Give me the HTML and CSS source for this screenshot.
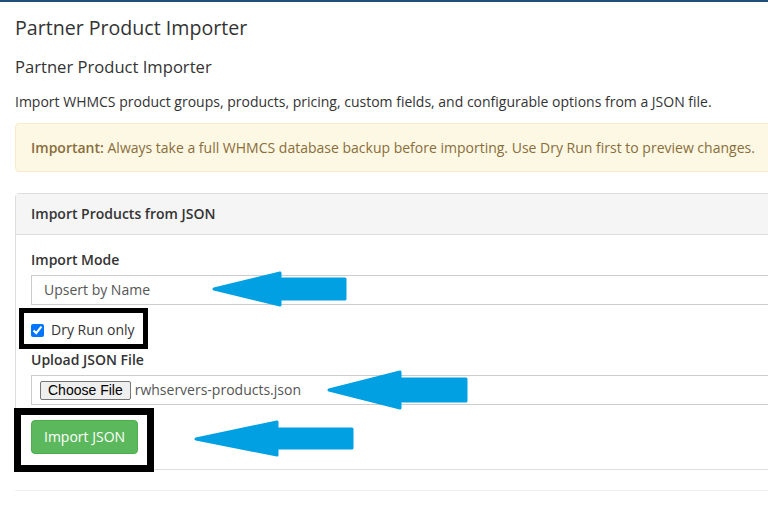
FILE: index.html
```html
<!DOCTYPE html>
<html lang="en">
<head>
  <meta charset="UTF-8">
  <title>Partner Product Importer</title>
  <link rel="stylesheet" href="styles.css">
</head>
<body>
  <div class="topbar"></div>
  <div class="content">
    <h1>Partner Product Importer</h1>
    <h2>Partner Product Importer</h2>
    <p class="lead">Import WHMCS product groups, products, pricing, custom fields, and configurable options from a JSON file.</p>

    <div class="alert">
      <strong>Important:</strong> Always take a full WHMCS database backup before importing. Use Dry Run first to preview changes.
    </div>

    <div class="panel">
      <div class="panel-heading">Import Products from JSON</div>
      <div class="panel-body">
        <div class="form-group">
          <label class="control-label">Import Mode</label>
          <div class="form-control">Upsert by Name</div>
        </div>
        <div class="checkbox">
          <input type="checkbox" checked>
          <span>Dry Run only</span>
        </div>
        <div class="form-group">
          <label class="control-label">Upload JSON File</label>
          <div class="form-control file-control">
            <span class="file-btn">Choose File</span>
            <span class="file-name">rwhservers-products.json</span>
          </div>
        </div>
        <button class="btn-success">Import JSON</button>
      </div>
    </div>
    <hr>
  </div>

  <!-- annotations drawn over the screenshot -->
  <div class="mark mark-dry"></div>
  <div class="mark mark-btn"></div>
  <svg class="arrows" width="768" height="512" viewBox="0 0 768 512">
    <g fill="#01a0e2" stroke="#01a0e2" stroke-width="3" stroke-linejoin="round">
      <polygon points="214,289 280,273 280,279 345,279 345,299 280,299 280,305"/>
      <polygon points="329,390 400,372 400,379 466,379 466,401 400,401 400,408"/>
      <polygon points="196,439 277,422 277,429 352,429 352,448 277,448 277,455"/>
    </g>
  </svg>
</body>
</html>
```

FILE: styles.css
```css
* {
  box-sizing: border-box;
}

html, body {
  overflow: hidden;
}

body {
  margin: 0;
  font-family: "Open Sans", "Liberation Sans", sans-serif;
  font-size: 14px;
  color: #333;
  background: #fff;
  position: relative;
  height: 512px;
}

.topbar {
  height: 2px;
  background: #1f4e79;
}

.content {
  width: 1000px;
  padding: 0 15px;
}

h1 {
  font-size: 19.6px;
  font-weight: 400;
  line-height: 22px;
  margin: 15px 0 0;
}

h2 {
  font-size: 16.6px;
  font-weight: 400;
  line-height: 20px;
  margin: 18px 0 0;
}

.lead {
  margin: 16px 0 0;
  line-height: 18px;
}

.alert {
  margin-top: 12px;
  padding: 14px 15px;
  background: #fcf8e3;
  border: 1px solid #faebcc;
  border-radius: 4px;
  color: #8a6d3b;
  line-height: 19px;
}

.alert strong {
  font-weight: 600;
}

.panel {
  margin-top: 21px;
  border: 1px solid #ddd;
  border-radius: 4px;
}

.panel-heading {
  background: #f5f5f5;
  border-bottom: 1px solid #ddd;
  padding: 11px 15px;
  font-weight: 600;
  line-height: 18px;
}

.panel-body {
  padding: 15px 15px 15px;
}

.control-label {
  display: block;
  font-weight: 600;
  margin: 1px 0 6px;
  line-height: 18px;
}

.form-control {
  height: 30px;
  border: 1px solid #ccc;
  padding: 5px 12px;
  line-height: 18px;
  color: #555;
  background: #fff;
}

.checkbox {
  display: flex;
  align-items: center;
  gap: 7px;
  margin: 16px 0 12px;
  line-height: 18px;
}

.checkbox input {
  margin: 0;
  width: 13px;
  height: 13px;
  accent-color: #0075ff;
}

.file-control {
  display: flex;
  align-items: center;
  padding: 0 8px;
}

.file-btn {
  font-family: "Liberation Sans", Arial, sans-serif;
  font-size: 14px;
  color: #000;
  background: #efefef;
  border: 1px solid #767676;
  border-radius: 2px;
  padding: 1px 7px;
  line-height: 15px;
  margin-right: 4px;
}

.file-name {
  color: #555;
}

.btn-success {
  margin-top: 15px;
  font-family: inherit;
  font-size: 14px;
  line-height: 18px;
  color: #fff;
  background: #5cb85c;
  border: 1px solid #4cae4c;
  border-radius: 4px;
  padding: 7px 12px;
}

hr {
  margin: 20px 0 0;
  border: 0;
  border-top: 1px solid #eee;
}

.mark {
  position: absolute;
  border: 5px solid #000;
}

.mark-dry {
  left: 19px;
  top: 308px;
  width: 129px;
  height: 41px;
}

.mark-btn {
  left: 14px;
  top: 408px;
  width: 140px;
  height: 64px;
  border-width: 7px;
}

.arrows {
  position: absolute;
  left: 0;
  top: 0;
  pointer-events: none;
}
```
